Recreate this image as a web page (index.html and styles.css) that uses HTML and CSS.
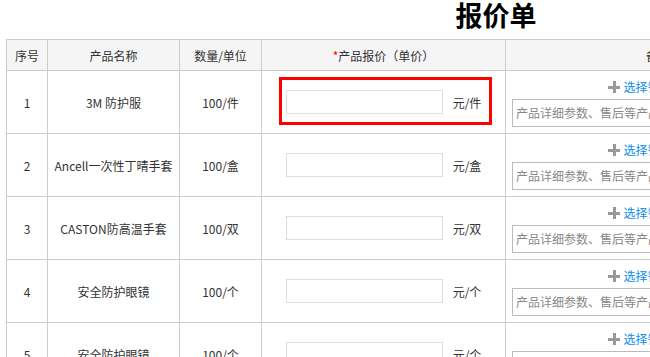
FILE: index.html
```html
<!DOCTYPE html>
<html>
<head>
	<meta charset="utf-8">
	<title>报价单</title>
	<link rel="stylesheet" href="styles.css">
</head>
<body>
	<div class="wrap">
		<h1 class="title">报价单</h1>
		<table class="quote">
			<colgroup>
				<col class="c-no">
				<col class="c-name">
				<col class="c-qty">
				<col class="c-price">
				<col class="c-note">
			</colgroup>
			<thead>
				<tr>
					<th>序号</th>
					<th>产品名称</th>
					<th>数量/单位</th>
					<th><span class="req">*</span>产品报价（单价）</th>
					<th>备注</th>
				</tr>
			</thead>
			<tbody>
				<tr>
					<td>1</td>
					<td>3M 防护服</td>
					<td>100/件</td>
					<td class="price">
						<input type="text" class="price-input"><span class="unit">元/件</span>
						<div class="mark"></div>
					</td>
					<td class="note">
						<a class="pick" href="#"><span class="plus"></span>选择销售资料库</a>
						<textarea placeholder="产品详细参数、售后等产品信息"></textarea>
					</td>
				</tr>
				<tr>
					<td>2</td>
					<td>Ancell一次性丁晴手套</td>
					<td>100/盒</td>
					<td class="price"><input type="text" class="price-input"><span class="unit">元/盒</span></td>
					<td class="note">
						<a class="pick" href="#"><span class="plus"></span>选择销售资料库</a>
						<textarea placeholder="产品详细参数、售后等产品信息"></textarea>
					</td>
				</tr>
				<tr>
					<td>3</td>
					<td>CASTON防高温手套</td>
					<td>100/双</td>
					<td class="price"><input type="text" class="price-input"><span class="unit">元/双</span></td>
					<td class="note">
						<a class="pick" href="#"><span class="plus"></span>选择销售资料库</a>
						<textarea placeholder="产品详细参数、售后等产品信息"></textarea>
					</td>
				</tr>
				<tr>
					<td>4</td>
					<td>安全防护眼镜</td>
					<td>100/个</td>
					<td class="price"><input type="text" class="price-input"><span class="unit">元/个</span></td>
					<td class="note">
						<a class="pick" href="#"><span class="plus"></span>选择销售资料库</a>
						<textarea placeholder="产品详细参数、售后等产品信息"></textarea>
					</td>
				</tr>
				<tr>
					<td>5</td>
					<td>安全防护眼镜</td>
					<td>100/个</td>
					<td class="price"><input type="text" class="price-input"><span class="unit">元/个</span></td>
					<td class="note">
						<a class="pick" href="#"><span class="plus"></span>选择销售资料库</a>
						<textarea placeholder="产品详细参数、售后等产品信息"></textarea>
					</td>
				</tr>
			</tbody>
		</table>
	</div>
</body>
</html>
```

FILE: styles.css
```css
body {
	margin: 0;
	padding: 0 6px;
	background: #fff;
	color: #333;
	font-family: "Noto Sans CJK SC", sans-serif;
	font-size: 12px;
}

.wrap {
	width: 980px;
}

.title {
	margin: 0 0 9px;
	height: 30px;
	line-height: 30px;
	text-align: center;
	font-size: 27px;
	font-weight: bold;
	color: #000;
}

.quote {
	width: 804px;
	table-layout: fixed;
	border-collapse: collapse;
}

.c-no { width: 41px; }
.c-name { width: 132px; }
.c-qty { width: 82px; }
.c-price { width: 244px; }
.c-note { width: 305px; }

.quote th,
.quote td {
	border: 1px solid #ccc;
	text-align: center;
	vertical-align: middle;
	padding: 0;
	font-weight: normal;
	white-space: nowrap;
}

.quote th {
	height: 30px;
	background: #f5f5f5;
}

.quote td {
	height: 62px;
}

.req {
	color: #f00;
}

.price {
	position: relative;
}

.price-input {
	box-sizing: border-box;
	width: 157px;
	height: 24px;
	border: 1px solid #ddd;
	margin: 0 10px 0 0;
	padding: 0 4px;
	vertical-align: middle;
}

.unit {
	vertical-align: middle;
}

/* red frame drawn over the first price cell */
.mark {
	position: absolute;
	left: 17px;
	top: 6px;
	width: 207px;
	height: 42px;
	border: 3px solid #f00;
}

.note {
	padding: 0 6px !important;
}

.pick {
	display: block;
	height: 18px;
	line-height: 18px;
	margin-bottom: 3px;
	color: #0a8cf0;
	text-decoration: none;
}

.plus {
	display: inline-block;
	position: relative;
	width: 12px;
	height: 12px;
	margin-right: 3px;
	vertical-align: -1px;
}

.plus::before,
.plus::after {
	content: "";
	position: absolute;
	background: #999;
}

.plus::before {
	left: 0;
	top: 5px;
	width: 12px;
	height: 3px;
}

.plus::after {
	left: 5px;
	top: 0;
	width: 3px;
	height: 12px;
}

textarea {
	display: block;
	box-sizing: border-box;
	width: 100%;
	height: 28px;
	border: 1px solid #bbb;
	padding: 5px 3px;
	font-family: inherit;
	font-size: 12px;
	line-height: 16px;
	resize: none;
	overflow: hidden;
}

textarea::placeholder {
	color: #888;
}
```
